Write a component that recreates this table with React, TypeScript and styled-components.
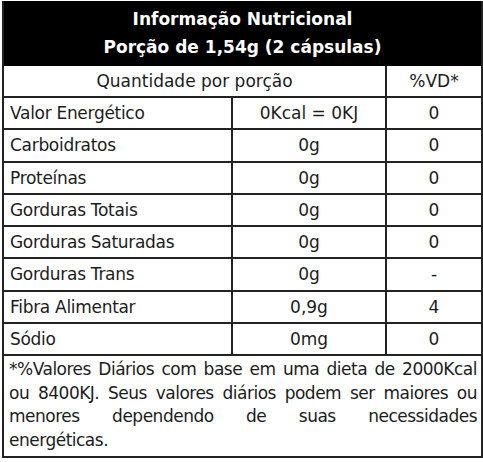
import React from "react"
import styled, { createGlobalStyle } from "styled-components"

const GlobalStyle = createGlobalStyle`
  body {
    margin: 0;
    background: #fff;
    font-family: "DejaVu Sans", Tahoma, sans-serif;
    color: #1c1c1c;
  }
`;

const Panel = styled.div`
  margin: 1px 0 0 2px;
  width: 479px;
  display: grid;
  grid-template-columns: 229px 154px 96px;
  border-left: 2px solid #222;
  box-sizing: border-box;
`;

const Title = styled.div`
  grid-column: 1 / -1;
  height: 65px;
  background: #000;
  color: #fff;
  font-weight: bold;
  font-size: 17px;
  line-height: 28px;
  text-align: center;
  padding-top: 4px;
  box-sizing: border-box;
  border-right: 2px solid #222;
`;

const Cell = styled.div<{ $span?: number, $align?: 'left' | 'center', $h?: number }>`
  grid-column: span ${p => p.$span ?? 1};
  height: ${p => p.$h ?? 32.25}px;
  box-sizing: border-box;
  border-right: 2px solid #222;
  border-bottom: 2px solid #222;
  display: flex;
  align-items: center;
  justify-content: ${p => p.$align === 'left' ? 'flex-start' : 'center'};
  padding: 0 6px;
  font-size: 17px;
  letter-spacing: ${p => p.$align === 'left' ? '-0.3px' : '0'};
  white-space: nowrap;
`;

const Footer = styled.div`
  grid-column: 1 / -1;
  box-sizing: border-box;
  height: 102px;
  border-right: 2px solid #222;
  border-bottom: 2px solid #222;
  padding: 2px 4px 0 5px;
  font-size: 17px;
  letter-spacing: -0.5px;
  line-height: 23.5px;
`;

const FooterLine = styled.div<{ $last?: boolean }>`
  white-space: nowrap;
  text-align: ${p => p.$last ? 'left' : 'justify'};
  text-align-last: ${p => p.$last ? 'left' : 'justify'};
`;

const rows: [string, string, string][] = [
  ['Valor Energético', '0Kcal = 0KJ', '0'],
  ['Carboidratos', '0g', '0'],
  ['Proteínas', '0g', '0'],
  ['Gorduras Totais', '0g', '0'],
  ['Gorduras Saturadas', '0g', '0'],
  ['Gorduras Trans', '0g', '-'],
  ['Fibra Alimentar', '0,9g', '4'],
  ['Sódio', '0mg', '0'],
];

const footerLines = [
  '*%Valores Diários com base em uma dieta de 2000Kcal',
  'ou 8400KJ. Seus valores diários podem ser maiores ou',
  'menores dependendo de suas necessidades',
  'energéticas.',
];

export default function App() {
  return <>
    <GlobalStyle />
    <Panel>
      <Title>
        Informação Nutricional<br />
        Porção de 1,54g (2 cápsulas)
      </Title>
      <Cell $span={2} $h={32}>Quantidade por porção</Cell>
      <Cell $h={32}>%VD*</Cell>
      {rows.map(([label, amount, vd]) => <React.Fragment key={label}>
        <Cell $align='left'>{label}</Cell>
        <Cell>{amount}</Cell>
        <Cell>{vd}</Cell>
      </React.Fragment>)}
      <Footer>
        {footerLines.map((line, i) =>
          <FooterLine key={i} $last={i === footerLines.length - 1}>{line}</FooterLine>
        )}
      </Footer>
    </Panel>
  </>
}
